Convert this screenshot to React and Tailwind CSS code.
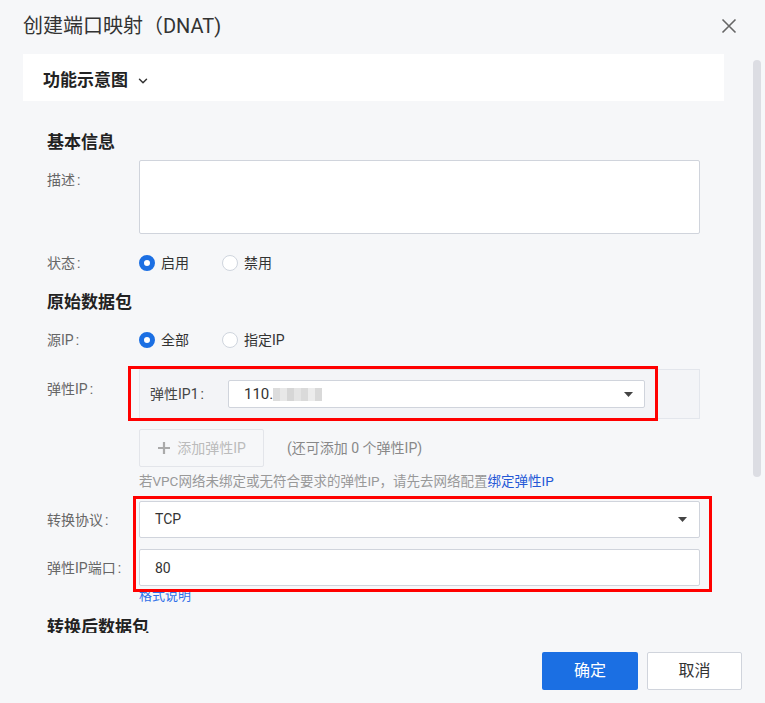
import React from "react";
import { ChevronDown } from "lucide-react";

const Caret = () => (
  <svg width="9" height="5" viewBox="0 0 9 5" className="shrink-0">
    <path d="M0 0 H9 L4.5 5 Z" fill="#444" />
  </svg>
);

const Radio = ({ checked, label }) => (
  <label className="flex items-center w-[83px] h-[20px]">
    {checked ? (
      <span className="w-[16px] h-[16px] rounded-full border-[5px] border-[#1b6fe3] bg-white shrink-0" />
    ) : (
      <span className="w-[16px] h-[16px] rounded-full border border-[#cfd5de] bg-white shrink-0" />
    )}
    <span className="ml-[6px] text-[14px] leading-[20px] text-[#333]">{label}</span>
  </label>
);

const Label = ({ children, className = "" }) => (
  <div className={`w-[92px] shrink-0 text-[14px] leading-[20px] text-[#666] ${className}`}>
    {children}
    <span className="ml-[2px]">:</span>
  </div>
);

const Heading = ({ children, className = "" }) => (
  <h3 className={`text-[17px] leading-[24px] font-bold text-[#222] ${className}`}>{children}</h3>
);

export default function App() {
  const blur = ["#dcdcdc", "#e8e8e8", "#d6d6d6", "#e4e4e4", "#dadada", "#ececec", "#d9d9d9"];

  return (
    <div className="relative w-[765px] h-[703px] bg-[#f6f7f9] flex flex-col overflow-hidden font-[Roboto,'Noto_Sans_CJK_SC',sans-serif]">
      {/* header */}
      <div className="h-[54px] shrink-0 flex items-center justify-between pl-[23px] pr-[28px] pb-[2px]">
        <h2 className="text-[20px] leading-[28px] text-[#333]">创建端口映射（DNAT)</h2>
        <svg width="16" height="16" viewBox="0 0 16 16">
          <path d="M1.5 1.5 L14.5 14.5 M14.5 1.5 L1.5 14.5" stroke="#666" strokeWidth="1.6" />
        </svg>
      </div>

      {/* body */}
      <div className="relative flex-1 overflow-hidden">
        <div className="absolute right-[4px] top-[6px] w-[8px] h-[417px] rounded-full bg-[#dcdde3]" />

        <div className="ml-[23px] w-[701px] h-[47px] bg-white flex items-center pl-[20px] pt-[6px]">
          <span className="text-[17px] font-bold text-[#222]">功能示意图</span>
          <ChevronDown size={14} strokeWidth={2.5} className="ml-[8px] text-[#333]" />
        </div>

        <div className="pl-[47px] w-[700px]">
          <Heading className="mt-[29px]">基本信息</Heading>

          <div className="flex mt-[6px]">
            <Label className="pt-[10px]">描述</Label>
            <textarea className="w-[561px] h-[74px] bg-white border border-[#d0d4dc] rounded-[2px] resize-none outline-none" />
          </div>

          <div className="flex items-center mt-[19px]">
            <Label>状态</Label>
            <Radio checked label="启用" />
            <Radio label="禁用" />
          </div>

          <Heading className="mt-[17px]">原始数据包</Heading>

          <div className="flex items-center mt-[16px]">
            <Label>源IP</Label>
            <Radio checked label="全部" />
            <Radio label="指定IP" />
          </div>

          <div className="flex mt-[19px]">
            <Label className="pt-[10px]">弹性IP</Label>
            <div className="w-[561px] border border-[#e3e6ec] bg-[#f3f4f7] p-[10px] flex items-center">
              <span className="w-[78px] text-[14px] text-[#444]">弹性IP1<span className="ml-[2px]">:</span></span>
              <div className="w-[417px] h-[28px] bg-white border border-[#d0d4dc] rounded-[2px] flex items-center justify-between pl-[15px] pr-[11px]">
                <div className="flex items-center">
                  <span className="text-[15px] text-[#333]">110.</span>
                  <div className="flex items-center blur-[0.6px]">
                    {blur.map((c, i) => (
                      <span key={i} className="w-[7px] h-[13px]" style={{ backgroundColor: c }} />
                    ))}
                  </div>
                </div>
                <Caret />
              </div>
            </div>
          </div>

          <div className="flex items-center mt-[10px] pl-[92px]">
            <button className="w-[125px] h-[38px] border border-[#e3e5ea] rounded-[2px] bg-[#f6f7f9] flex items-center justify-center gap-[6px] text-[14px] text-[#bbb]">
              <svg width="14" height="14" viewBox="0 0 14 14">
                <path d="M7 1 V13 M1 7 H13" stroke="#aaa" strokeWidth="2.2" />
              </svg>
              添加弹性IP
            </button>
            <span className="ml-[23px] text-[14px] text-[#888]">(还可添加 0 个弹性IP)</span>
          </div>

          <p className="mt-[4px] pl-[92px] text-[13.5px] leading-[20px] text-[#999] whitespace-nowrap">
            若VPC网络未绑定或无符合要求的弹性IP，请先去网络配置<span className="text-[#2458d6]">绑定弹性IP</span>
          </p>

          <div className="flex mt-[10px]">
            <Label className="pt-[9px]">转换协议</Label>
            <div className="w-[561px] h-[37px] bg-white border border-[#d0d4dc] rounded-[2px] flex items-center justify-between pl-[15px] pr-[12px]">
              <span className="text-[14px] text-[#333]">TCP</span>
              <Caret />
            </div>
          </div>

          <div className="flex mt-[11px]">
            <Label className="pt-[9px] whitespace-nowrap">弹性IP端口</Label>
            <input
              readOnly
              value="80"
              className="w-[561px] h-[37px] bg-white border border-[#d0d4dc] rounded-[2px] pl-[15px] text-[14px] text-[#333] outline-none"
            />
          </div>

          <p className="mt-[1px] pl-[92px] text-[13px] leading-[18px] text-[#2f6fe8]">格式说明</p>

          <Heading className="mt-[10px]">转换后数据包</Heading>
        </div>
      </div>

      {/* footer */}
      <div className="h-[70px] shrink-0 flex justify-end gap-[9px] pr-[23px] pt-[19px]">
        <button className="w-[96px] h-[38px] rounded-[2px] bg-[#1b6fe3] text-white text-[16px]">确定</button>
        <button className="w-[95px] h-[38px] rounded-[2px] bg-white border border-[#d0d4dc] text-[#333] text-[16px]">取消</button>
      </div>

      {/* annotation boxes */}
      <div className="absolute left-[128px] top-[366px] w-[530px] h-[55px] border-[3px] border-[#ff0000] pointer-events-none" />
      <div className="absolute left-[133px] top-[496px] w-[579px] h-[96px] border-[3px] border-[#ff0000] pointer-events-none" />
    </div>
  );
}
